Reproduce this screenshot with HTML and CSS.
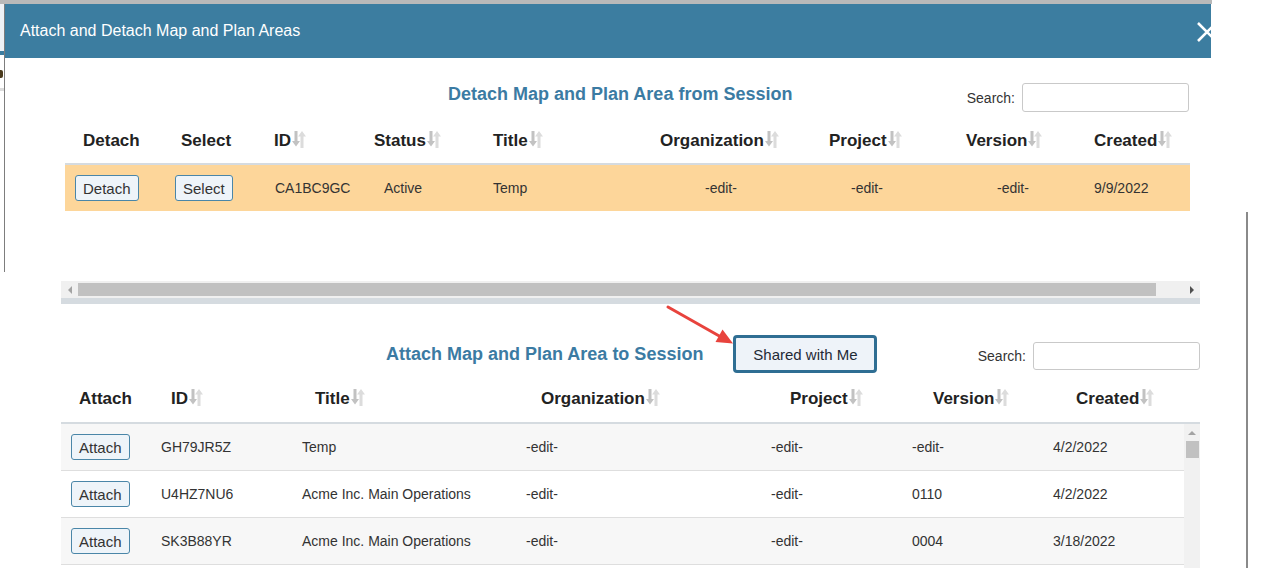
FILE: index.html
```html
<!DOCTYPE html>
<html lang="en">
  <head>
    <meta charset="UTF-8" />
    <meta name="viewport" content="width=device-width, initial-scale=1.0" />
    <title>Attach and Detach Map and Plan Areas</title>
    <link rel="stylesheet" href="styles.css">
  </head>
  <body>
    <div class="screen">
      <!-- sliver of the page behind the dialog -->
      <div class="under">
        <div class="under-cap"></div>
        <div class="under-frame">
          <div class="under-head"></div>
          <div class="under-bar"></div>
          <div class="under-row"><div class="under-glyph"></div></div>
          <div class="under-rule"></div>
        </div>
      </div>

      <div class="modal">
        <div class="modal-header">
          <span class="modal-title">Attach and Detach Map and Plan Areas</span>
          <svg class="close-icon" viewBox="0 0 20 20">
            <path d="M1 1L19 19M19 1L1 19" />
          </svg>
        </div>

        <div class="modal-body">
          <section class="panel">
            <div class="toolbar toolbar-detach">
              <h3 class="panel-title title-detach">Detach Map and Plan Area from Session</h3>
              <label class="search search-detach">Search: <input type="search" /></label>
            </div>

            <div class="scroll-box">
              <div class="table table-detach">
                <div class="thead cols-detach-head">
                  <div class="th">Detach</div>
                  <div class="th">Select</div>
                  <div class="th">ID<svg class="sort" viewBox="0 0 14 17"><path class="sort-down" d="M2.5 0h3v10h2.5L4 15.5 0 10h2.5z"/><path class="sort-up" d="M10 0l4 5.5h-2.5V17h-3V5.5H6z"/></svg></div>
                  <div class="th">Status<svg class="sort" viewBox="0 0 14 17"><path class="sort-down" d="M2.5 0h3v10h2.5L4 15.5 0 10h2.5z"/><path class="sort-up" d="M10 0l4 5.5h-2.5V17h-3V5.5H6z"/></svg></div>
                  <div class="th">Title<svg class="sort" viewBox="0 0 14 17"><path class="sort-down" d="M2.5 0h3v10h2.5L4 15.5 0 10h2.5z"/><path class="sort-up" d="M10 0l4 5.5h-2.5V17h-3V5.5H6z"/></svg></div>
                  <div class="th">Organization<svg class="sort" viewBox="0 0 14 17"><path class="sort-down" d="M2.5 0h3v10h2.5L4 15.5 0 10h2.5z"/><path class="sort-up" d="M10 0l4 5.5h-2.5V17h-3V5.5H6z"/></svg></div>
                  <div class="th">Project<svg class="sort" viewBox="0 0 14 17"><path class="sort-down" d="M2.5 0h3v10h2.5L4 15.5 0 10h2.5z"/><path class="sort-up" d="M10 0l4 5.5h-2.5V17h-3V5.5H6z"/></svg></div>
                  <div class="th">Version<svg class="sort" viewBox="0 0 14 17"><path class="sort-down" d="M2.5 0h3v10h2.5L4 15.5 0 10h2.5z"/><path class="sort-up" d="M10 0l4 5.5h-2.5V17h-3V5.5H6z"/></svg></div>
                  <div class="th">Created<svg class="sort" viewBox="0 0 14 17"><path class="sort-down" d="M2.5 0h3v10h2.5L4 15.5 0 10h2.5z"/><path class="sort-up" d="M10 0l4 5.5h-2.5V17h-3V5.5H6z"/></svg></div>
                </div>
                <div class="trow row-selected cols-detach-body">
                  <div class="td"><button class="btn">Detach</button></div>
                  <div class="td"><button class="btn">Select</button></div>
                  <div class="td">CA1BC9GC</div>
                  <div class="td">Active</div>
                  <div class="td">Temp</div>
                  <div class="td">-edit-</div>
                  <div class="td">-edit-</div>
                  <div class="td">-edit-</div>
                  <div class="td">9/9/2022</div>
                </div>
              </div>

              <div class="hscroll">
                <div class="hs-btn hs-left"></div>
                <div class="hs-thumb"></div>
                <div class="hs-space"></div>
                <div class="hs-btn hs-right"></div>
              </div>
            </div>
            <div class="scroll-foot"></div>
          </section>

          <section class="panel panel-attach">
            <div class="toolbar toolbar-attach">
              <h3 class="panel-title title-attach">Attach Map and Plan Area to Session</h3>
              <button class="btn-shared">Shared with Me</button>
              <label class="search search-attach">Search: <input type="search" /></label>
            </div>

            <div class="table">
              <div class="thead cols-attach-head">
                <div class="th">Attach</div>
                <div class="th">ID<svg class="sort" viewBox="0 0 14 17"><path class="sort-down" d="M2.5 0h3v10h2.5L4 15.5 0 10h2.5z"/><path class="sort-up" d="M10 0l4 5.5h-2.5V17h-3V5.5H6z"/></svg></div>
                <div class="th">Title<svg class="sort" viewBox="0 0 14 17"><path class="sort-down" d="M2.5 0h3v10h2.5L4 15.5 0 10h2.5z"/><path class="sort-up" d="M10 0l4 5.5h-2.5V17h-3V5.5H6z"/></svg></div>
                <div class="th">Organization<svg class="sort" viewBox="0 0 14 17"><path class="sort-down" d="M2.5 0h3v10h2.5L4 15.5 0 10h2.5z"/><path class="sort-up" d="M10 0l4 5.5h-2.5V17h-3V5.5H6z"/></svg></div>
                <div class="th">Project<svg class="sort" viewBox="0 0 14 17"><path class="sort-down" d="M2.5 0h3v10h2.5L4 15.5 0 10h2.5z"/><path class="sort-up" d="M10 0l4 5.5h-2.5V17h-3V5.5H6z"/></svg></div>
                <div class="th">Version<svg class="sort" viewBox="0 0 14 17"><path class="sort-down" d="M2.5 0h3v10h2.5L4 15.5 0 10h2.5z"/><path class="sort-up" d="M10 0l4 5.5h-2.5V17h-3V5.5H6z"/></svg></div>
                <div class="th">Created<svg class="sort" viewBox="0 0 14 17"><path class="sort-down" d="M2.5 0h3v10h2.5L4 15.5 0 10h2.5z"/><path class="sort-up" d="M10 0l4 5.5h-2.5V17h-3V5.5H6z"/></svg></div>
              </div>

              <div class="tbody-wrap">
                <div class="rows">
                  <div class="trow cols-attach-body">
                    <div class="td"><button class="btn">Attach</button></div>
                    <div class="td">GH79JR5Z</div>
                    <div class="td">Temp</div>
                    <div class="td">-edit-</div>
                    <div class="td">-edit-</div>
                    <div class="td">-edit-</div>
                    <div class="td">4/2/2022</div>
                  </div>
                  <div class="trow cols-attach-body">
                    <div class="td"><button class="btn">Attach</button></div>
                    <div class="td">U4HZ7NU6</div>
                    <div class="td">Acme Inc. Main Operations</div>
                    <div class="td">-edit-</div>
                    <div class="td">-edit-</div>
                    <div class="td">0110</div>
                    <div class="td">4/2/2022</div>
                  </div>
                  <div class="trow cols-attach-body">
                    <div class="td"><button class="btn">Attach</button></div>
                    <div class="td">SK3B88YR</div>
                    <div class="td">Acme Inc. Main Operations</div>
                    <div class="td">-edit-</div>
                    <div class="td">-edit-</div>
                    <div class="td">0004</div>
                    <div class="td">3/18/2022</div>
                  </div>
                  <div class="trow row-cut cols-attach-body"></div>
                </div>
                <div class="vscroll">
                  <div class="vs-btn"></div>
                  <div class="vs-thumb"></div>
                </div>
              </div>
            </div>
          </section>
        </div>
      </div>

      <div class="gutter"><div class="gutter-line"></div></div>
    </div>

    <!-- annotation arrow pointing at the button -->
    <svg class="callout" viewBox="0 0 80 50">
      <path class="callout-line" d="M8 7L61 37" />
      <path class="callout-head" d="M73 43.5L55.5 42L62.5 29.5z" />
    </svg>
  </body>
</html>
```

FILE: styles.css
```css
body {
  margin: 0;
  font-family: "Liberation Sans", Arial, sans-serif;
  color: #333;
  background: #fff;
  position: relative;
  height: 568px;
  overflow: hidden;
}
* {
  box-sizing: border-box;
}
.screen {
  display: flex;
  height: 568px;
}

/* page behind the dialog */
.under {
  width: 5px;
  flex-shrink: 0;
}
.under-cap {
  height: 4px;
  background: #b9b9b9;
}
.under-frame {
  height: 268px;
  border-right: 1px solid #7d7d7d;
}
.under-head {
  height: 47px;
  background: #eef2f6;
}
.under-bar {
  height: 4px;
  background: #3c7da0;
}
.under-row {
  height: 33px;
  padding-top: 15px;
}
.under-glyph {
  width: 3px;
  height: 8px;
  border-radius: 0 2px 2px 0;
  background: #4a3a1c;
}
.under-rule {
  height: 3px;
  background: #dcdcdc;
}

/* dialog */
.modal {
  width: 1207px;
  flex-shrink: 0;
  border-top: 4px solid #b9b9b9;
}
.modal-header {
  height: 54px;
  margin-right: 1px;
  background: #3c7da0;
  padding-left: 15px;
  display: flex;
  align-items: center;
  justify-content: space-between;
  overflow: hidden;
}
.modal-title {
  color: #fff;
  font-size: 16px;
}
.close-icon {
  width: 20px;
  height: 20px;
  margin-right: -6px;
  margin-top: 2px;
  fill: none;
  stroke: #fff;
  stroke-width: 2.6;
}
.modal-body {
  padding: 25px 0 0 56px;
}
.panel {
  width: 1139px;
}

.toolbar {
  display: flex;
}
.toolbar-detach {
  align-items: flex-start;
  height: 29px;
}
.toolbar-attach {
  align-items: center;
  height: 38px;
  margin-top: 31px;
}
.panel-title {
  margin: 0;
  font-size: 18px;
  font-weight: bold;
  line-height: 22px;
  color: #3b7ba3;
}
.title-detach {
  margin-left: 387px;
}
.title-attach {
  margin-left: 325px;
}
.search {
  margin-left: auto;
  display: flex;
  align-items: center;
  gap: 7px;
  font-size: 14px;
  color: #333;
}
.search-detach {
  margin-right: 11px;
}
.search-attach {
  margin-top: 4px;
}
.search input {
  width: 167px;
  height: 29px;
  border: 1px solid #c9c9c9;
  border-radius: 3px;
  background: #fff;
}
.search-attach input {
  height: 28px;
}

.btn-shared {
  margin-left: 30px;
  width: 144px;
  height: 38px;
  padding: 0;
  border: 3px solid #2f6e93;
  border-radius: 4px;
  background: #eef3f9;
  font-family: inherit;
  font-size: 15px;
  color: #1f2a36;
  white-space: nowrap;
}

/* tables */
.table-detach {
  margin-left: 4px;
  width: 1125px;
}
.thead {
  display: grid;
  align-items: end;
  padding-left: 18px;
  border-bottom: 2px solid #d5dbe0;
}
.th {
  display: flex;
  align-items: center;
  font-size: 17px;
  font-weight: bold;
  line-height: 20px;
  color: #222;
}
.sort {
  width: 14px;
  height: 17px;
  margin-left: 1px;
  margin-top: -4px;
}
.sort-down {
  fill: #c2c2c2;
}
.sort-up {
  fill: #dcdcdc;
}
.cols-detach-head {
  height: 53px;
  padding-bottom: 12px;
  grid-template-columns: 98px 93px 100px 119px 167px 169px 137px 128px 1fr;
}
.cols-attach-head {
  height: 51px;
  padding-bottom: 13px;
  grid-template-columns: 92px 144px 226px 249px 143px 143px 1fr;
}
.trow {
  display: grid;
  align-items: center;
  padding-left: 10px;
  font-size: 14px;
  color: #333;
}
.row-selected {
  height: 46px;
  background: #fdd69a;
}
.cols-detach-body {
  grid-template-columns: 100px 100px 109px 109px 212px 146px 146px 97px 1fr;
}
.cols-attach-body {
  height: 47px;
  border-bottom: 1px solid #dedede;
  grid-template-columns: 90px 141px 224px 245px 141px 141px 1fr;
}
.rows .trow:nth-child(odd) {
  background: #f7f7f7;
}
.rows .row-cut {
  height: 4px;
  border-bottom: none;
}
.btn {
  height: 26px;
  padding: 0 7px;
  border: 1px solid #4a86a8;
  border-radius: 3px;
  background: #eef4f9;
  font-family: inherit;
  font-size: 15px;
  color: #333;
}

/* scrollbars */
.hscroll {
  display: flex;
  height: 17px;
  margin-top: 70px;
  background: #f0f0f0;
}
.hs-btn {
  width: 17px;
  display: flex;
  align-items: center;
  justify-content: center;
}
.hs-left::before {
  content: "";
  border-right: 4px solid #a3a3a3;
  border-top: 4px solid transparent;
  border-bottom: 4px solid transparent;
}
.hs-right::before {
  content: "";
  border-left: 4px solid #505050;
  border-top: 4px solid transparent;
  border-bottom: 4px solid transparent;
}
.hs-thumb {
  width: 1078px;
  margin: 2px 0;
  background: #c1c1c1;
}
.hs-space {
  flex: 1;
}
.scroll-foot {
  height: 6px;
  background: #d5dbe0;
}
.tbody-wrap {
  display: flex;
}
.rows {
  width: 1123px;
}
.vscroll {
  width: 16px;
  background: #f1f1f1;
  display: flex;
  flex-direction: column;
  align-items: center;
}
.vs-btn {
  height: 17px;
  display: flex;
  align-items: center;
}
.vs-btn::before {
  content: "";
  border-bottom: 4px solid #a3a3a3;
  border-left: 4px solid transparent;
  border-right: 4px solid transparent;
}
.vs-thumb {
  width: 13px;
  height: 17px;
  background: #c1c1c1;
}

/* right side of the screen behind the dialog */
.gutter {
  flex: 1;
}
.gutter-line {
  margin: 212px 0 0 34px;
  height: 356px;
  border-left: 2px solid #8a8a8a;
}

.callout {
  position: absolute;
  left: 660px;
  top: 300px;
  width: 80px;
  height: 50px;
}
.callout-line {
  stroke: #e8433d;
  stroke-width: 3;
  stroke-linecap: round;
  fill: none;
}
.callout-head {
  fill: #e8433d;
}
```
